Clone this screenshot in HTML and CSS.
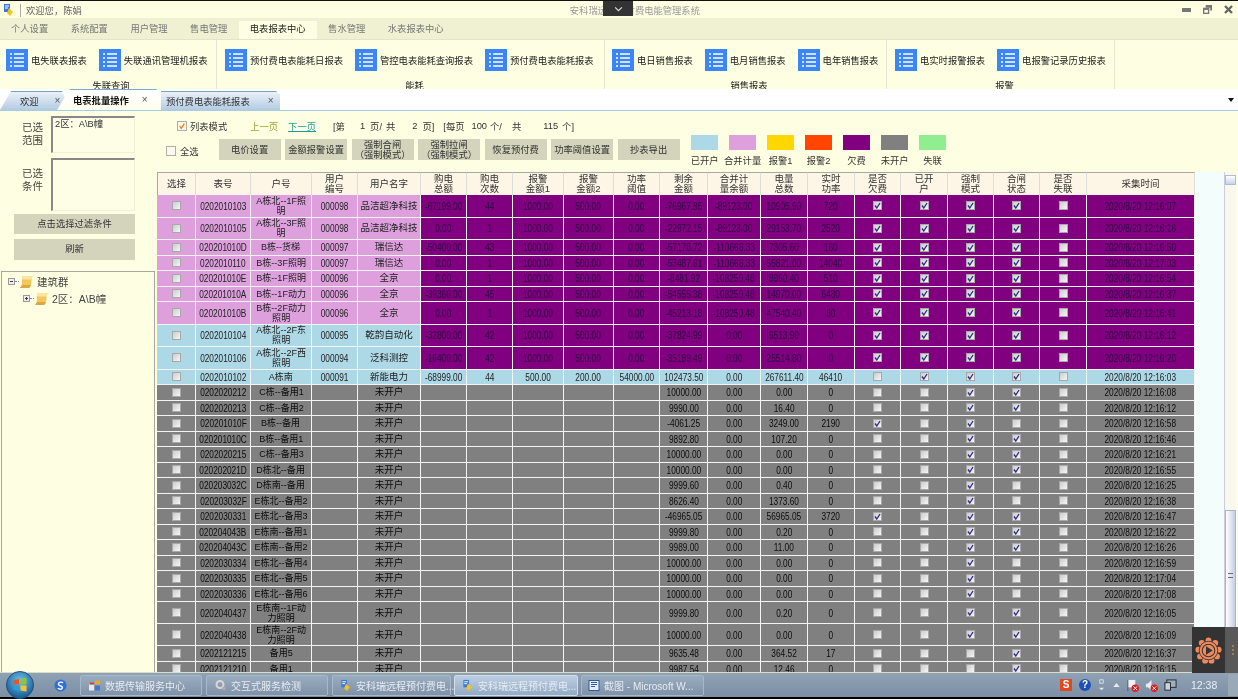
FILE: index.html
```html
<!DOCTYPE html>
<html>
<head>
    <title>安科瑞远程预付费电能管理系统</title>
    <link rel="stylesheet" href="styles.css">
</head>
<body>
    <svg class="sprite">
        <symbol id="list" viewBox="0 0 22 22">
            <rect width="22" height="22" fill="#3a86f8"/>
            <path d="M8 5h10M8 9h10M8 13h10M8 17h10" stroke="#fff" stroke-width="1.4"/>
            <path d="M4 5h2M4 9h2M4 13h2M4 17h2" stroke="#fff" stroke-width="1.4"/>
        </symbol>
        <symbol id="scroll" viewBox="0 0 13 12">
            <path d="M2 0h11c-1 1-1.500 2-1.500 4.500s-.5 5-2.500 7.500H0c1.500-1 2-3 2-6s.5-4 0-6z" fill="#f2c75c"/>
            <path d="M2 0h11c-1 1-1.500 2-1.500 3.500H2.300z" fill="#fbe6a0"/>
            <path d="M0 12h9c1-.8 1.500-1.800 2-3H2z" fill="#dca93e"/>
        </symbol>
        <symbol id="doc" viewBox="0 0 12 14">
            <path d="M1 1h6v8H1z" fill="#3c78d8"/>
            <path d="M6 5l4 4-3 4-3-3z" fill="#f5c518"/>
            <path d="M2 3h4M2 5h3" stroke="#fff"/>
        </symbol>
    </svg>

    <div class="screen">
        <div class="topline"></div>

        <div class="titlebar">
            <svg class="logo"><use href="#doc"/></svg>
            <span class="title-sep"></span>
            <span class="welcome">欢迎您，陈娟</span>
            <span class="app-name">安科瑞远程预付费电能管理系统</span>
            <div class="win-btns">
                <svg viewBox="0 0 9 9"><rect y="3" width="9" height="4" fill="#777"/></svg>
                <svg viewBox="0 0 10 10"><path d="M3 0h7v6H8V3H3z" fill="#777"/><rect y="3" width="7" height="7" fill="#777"/><rect x="1.500" y="5.500" width="4" height="3" fill="#fefee2"/></svg>
                <svg viewBox="0 0 9 9"><path d="M1 1l7 7M8 1l-7 7" stroke="#666" stroke-width="2.400"/></svg>
            </div>
        </div>

        <div class="menubar">
            <span class="menu-tab">个人设置</span>
            <span class="menu-tab">系统配置</span>
            <span class="menu-tab">用户管理</span>
            <span class="menu-tab">售电管理</span>
            <span class="menu-tab active">电表报表中心</span>
            <span class="menu-tab">售水管理</span>
            <span class="menu-tab">水表报表中心</span>
        </div>

        <div class="ribbon">
            <div class="rib-group g1">
                <div class="rib-btns">
                    <span class="rib-btn"><svg><use href="#list"/></svg>电失联表报表</span>
                    <span class="rib-btn"><svg><use href="#list"/></svg>失联通讯管理机报表</span>
                </div>
                <div class="rib-label">失联查询</div>
            </div>
            <div class="rib-group g2">
                <div class="rib-btns">
                    <span class="rib-btn"><svg><use href="#list"/></svg>预付费电表能耗日报表</span>
                    <span class="rib-btn"><svg><use href="#list"/></svg>管控电表能耗查询报表</span>
                    <span class="rib-btn"><svg><use href="#list"/></svg>预付费电表能耗报表</span>
                </div>
                <div class="rib-label">能耗</div>
            </div>
            <div class="rib-group g3">
                <div class="rib-btns">
                    <span class="rib-btn"><svg><use href="#list"/></svg>电日销售报表</span>
                    <span class="rib-btn"><svg><use href="#list"/></svg>电月销售报表</span>
                    <span class="rib-btn"><svg><use href="#list"/></svg>电年销售报表</span>
                </div>
                <div class="rib-label">销售报表</div>
            </div>
            <div class="rib-group g4">
                <div class="rib-btns">
                    <span class="rib-btn"><svg><use href="#list"/></svg>电实时报警报表</span>
                    <span class="rib-btn"><svg><use href="#list"/></svg>电报警记录历史报表</span>
                </div>
                <div class="rib-label">报警</div>
            </div>
        </div>

        <div class="doctabs">
            <div class="doc-tab first"><span>欢迎</span><i>×</i></div>
            <div class="doc-tab current"><span>电表批量操作</span><i>×</i></div>
            <div class="doc-tab third"><span>预付费电表能耗报表</span><i>×</i></div>
            <span class="tabs-arrow"></span>
        </div>

        <div class="main">
            <div class="side">
                <div class="pick">
                    <div class="pick-label">已选<br>范围</div>
                    <div class="pick-box">2区：A\B幢</div>
                </div>
                <div class="pick second">
                    <div class="pick-label">已选<br>条件</div>
                    <div class="pick-box"></div>
                </div>
                <div class="side-btn">点击选择过滤条件</div>
                <div class="side-btn refresh">刷新</div>
                <div class="tree">
                    <div class="tree-row">
                        <svg class="expander" viewBox="0 0 7 7"><rect x=".5" y=".5" width="6" height="6" fill="#eee" stroke="#999"/><path d="M2 3.500h3" stroke="#444"/></svg>
                        <span class="dots"></span>
                        <svg class="scroll-ico"><use href="#scroll"/></svg>
                        <span>建筑群</span>
                    </div>
                    <div class="tree-row child">
                        <svg class="expander" viewBox="0 0 7 7"><rect x=".5" y=".5" width="6" height="6" fill="#eee" stroke="#999"/><path d="M2 3.500h3M3.500 2v3" stroke="#336"/></svg>
                        <span class="dots"></span>
                        <svg class="scroll-ico"><use href="#scroll"/></svg>
                        <span>2区：A\B幢</span>
                    </div>
                </div>
            </div>

            <div class="content">
                <div class="tools">
                    <div class="tools-row">
                        <span class="box orange"><svg viewBox="0 0 10 10"><path d="M2 5l2 3 4-6" fill="none" stroke="#e8820c" stroke-width="1.600"/></svg></span>
                        <span class="mode">列表模式</span>
                        <span class="prev">上一页</span>
                        <span class="next">下一页</span>
                        <span class="pg p1">[第</span>
                        <span class="pg p2">1</span>
                        <span class="pg p3">页/</span>
                        <span class="pg p4">共</span>
                        <span class="pg p5">2</span>
                        <span class="pg p6">页]</span>
                        <span class="pg p7">[每页</span>
                        <span class="pg p8">100</span>
                        <span class="pg p9">个/</span>
                        <span class="pg p10">共</span>
                        <span class="pg p11">115</span>
                        <span class="pg p12">个]</span>
                    </div>
                    <div class="tools-row second">
                        <span class="box"></span>
                        <span class="all">全选</span>
                        <div class="actions">
                            <span class="act">电价设置</span>
                            <span class="act">金额报警设置</span>
                            <span class="act">强制合闸<br>（强制模式）</span>
                            <span class="act">强制拉闸<br>（强制模式）</span>
                            <span class="act">恢复预付费</span>
                            <span class="act">功率阈值设置</span>
                            <span class="act">抄表导出</span>
                        </div>
                        <div class="legend">
                            <div class="leg"><b class="c-blue"></b>已开户</div>
                            <div class="leg"><b class="c-plum"></b>合并计量</div>
                            <div class="leg"><b class="c-gold"></b>报警1</div>
                            <div class="leg"><b class="c-red"></b>报警2</div>
                            <div class="leg"><b class="c-purple"></b>欠费</div>
                            <div class="leg"><b class="c-gray"></b>未开户</div>
                            <div class="leg"><b class="c-green"></b>失联</div>
                        </div>
                    </div>
                </div>

                <div class="grid-area">
                    <table class="meters">
                        <thead>
                            <tr>
                                <th>选择</th><th>表号</th><th>户号</th><th>用户<br>编号</th><th>用户名字</th>
                                <th>购电<br>总额</th><th>购电<br>次数</th><th>报警<br>金额1</th><th>报警<br>金额2</th><th>功率<br>阈值</th>
                                <th>剩余<br>金额</th><th>合并计<br>量余额</th><th>电量<br>总数</th><th>实时<br>功率</th><th>是否<br>欠费</th>
                                <th>已开<br>户</th><th>强制<br>模式</th><th>合闸<br>状态</th><th>是否<br>失联</th><th>采集时间</th>
                            </tr>
                        </thead>
                        <tbody id="meterRows"></tbody>
                    </table>
                    <div class="grid-blank"></div>
                    <div class="vscroll">
                        <div class="vs-up"></div>
                        <div class="vs-thumb"><span></span></div>
                    </div>
                </div>
            </div>
        </div>

        <div class="taskbar">
            <svg class="orb" viewBox="0 0 30 30">
                <defs><radialGradient id="orbFill" cx=".5" cy=".35" r=".7"><stop offset="0" stop-color="#6fc3ee"/><stop offset="1" stop-color="#0c4f8a"/></radialGradient></defs>
                <circle cx="15" cy="15" r="14.500" fill="url(#orbFill)" stroke="#23507a"/>
                <path d="M8 10l6-1.500v6H8z" fill="#e8552a"/>
                <path d="M15.500 8.300l6.500-1v7l-6.500.2z" fill="#8cc63f"/>
                <path d="M8 15.500h6V21l-6-1z" fill="#2a9fe0"/>
                <path d="M15.500 15.500H22V22l-6.500-1z" fill="#fbc02d"/>
            </svg>
            <svg class="quick" viewBox="0 0 14 14"><circle cx="7" cy="7" r="6.500" fill="#2e6fd8"/><path d="M9.800 4C7 2.500 4 4 5 6s4.500 1.200 4 3.500-3.500 1.500-5 .5" fill="none" stroke="#fff" stroke-width="1.500"/></svg>
            <div class="task"><svg viewBox="0 0 12 12"><path d="M0 5h5v6H0z" fill="#e8e8e8"/><path d="M6 1h5v4H6z" fill="#f2a71b"/><path d="M6 6h5v5H6z" fill="#3c78d8"/><path d="M1 3h4v2H1z" fill="#d8402a"/></svg>数据传输服务中心</div>
            <div class="task"><svg viewBox="0 0 12 12"><circle cx="5" cy="5" r="3.500" fill="none" stroke="#d8d8d8" stroke-width="2"/><circle cx="9" cy="9" r="2" fill="#aaa"/></svg>交互式服务检测</div>
            <div class="task app"><svg><use href="#doc"/></svg>安科瑞远程预付费电...</div>
            <div class="task app on"><svg><use href="#doc"/></svg>安科瑞远程预付费电...</div>
            <div class="task word"><svg viewBox="0 0 12 12"><rect x="1" y="1" width="10" height="10" fill="#e8eef8" stroke="#2a5ca8"/><path d="M3 3h6M3 5h6M3 7h4" stroke="#2a5ca8"/></svg>截图 - Microsoft W...</div>
            <div class="tray">
                <span class="t-s">S</span>
                <span class="t-help">?</span>
                <svg class="t-small" viewBox="0 0 8 14"><path d="M2 1h4v4H2z" fill="none" stroke="#dfe6ee"/><path d="M1 10h6l-3 3z" fill="#dfe6ee"/></svg>
                <svg class="t-up" viewBox="0 0 8 5"><path d="M0 5l4-5 4 5z" fill="#e4ebf2"/></svg>
                <svg class="t-ico" viewBox="0 0 14 14"><path d="M2 1h8v8H2z" fill="#eef2f6"/><path d="M2 1v12" stroke="#555"/><circle cx="10" cy="10" r="4" fill="#d82020"/><path d="M8 8l4 4M12 8l-4 4" stroke="#fff"/></svg>
                <svg class="t-ico" viewBox="0 0 14 14"><path d="M1 5h2l4-4v11L3 9H1z" fill="#e8ecf0"/><circle cx="10" cy="10" r="4" fill="#d82020"/><path d="M8 8l4 4M12 8l-4 4" stroke="#fff"/></svg>
                <svg class="t-ico" viewBox="0 0 14 14"><rect x="3" y="1" width="10" height="8" fill="#9fb0b8" stroke="#223"/><rect x="1" y="4" width="6" height="8" fill="#c8d4d8" stroke="#223"/></svg>
                <span class="clock">12:38</span>
                <span class="show-desk"></span>
            </div>
        </div>
        <div class="bottomline"></div>

        <div class="title-drop"><svg viewBox="0 0 8 5"><path d="M1 1l3 3 3-3" fill="none" stroke="#ddd"/></svg></div>

        <div class="recorder">
            <svg viewBox="0 0 32 32">
                <g fill="#f08a5d">
                    <circle cx="16" cy="4" r="3.500"/><circle cx="24" cy="7" r="3.500"/><circle cx="28" cy="15" r="3.500"/>
                    <circle cx="26" cy="23" r="3.500"/><circle cx="19.500" cy="28" r="3.500"/><circle cx="12" cy="28" r="3.500"/>
                    <circle cx="6" cy="23" r="3.500"/><circle cx="4" cy="15" r="3.500"/><circle cx="8" cy="7" r="3.500"/>
                </g>
                <circle cx="16" cy="16" r="11" fill="#f08a5d" stroke="#333" stroke-width="1"/>
                <circle cx="16" cy="16" r="7.500" fill="none" stroke="#333" stroke-width="1.200"/>
                <path d="M13 11l8 5-8 5z" fill="#333"/>
            </svg>
            <div class="rec-dots"><i></i><i></i><i></i></div>
        </div>
    </div>

    <script src="app.js"></script>
</body>
</html>
```

FILE: styles.css
```css
html, body {
    margin: 0;
    padding: 0;
    overflow: hidden;
}
body {
    width: 1238px;
    height: 699px;
    font-family: "Liberation Sans", "Noto Sans CJK SC", sans-serif;
    font-size: 9.3px;
    color: #333;
    background-color: #000;
}
.sprite {
    display: none;
}
.screen {
    position: relative;
    display: flex;
    flex-direction: column;
    width: 1238px;
    height: 699px;
    overflow: hidden;
    filter: blur(.35px);
}
.topline {
    height: 1px;
    background-color: #111;
}
.titlebar {
    display: flex;
    align-items: center;
    height: 17px;
    background-color: #fefee2;
    color: #777;
}
.logo {
    width: 12px;
    height: 14px;
    margin-left: 3px;
}
.title-sep {
    width: 1px;
    height: 13px;
    margin: 2px 5px 0 5px;
    background-color: #aaa;
}
.welcome {
    color: #666;
}
.app-name {
    margin-left: 488px;
    color: #999;
}
.win-btns {
    display: flex;
    align-items: center;
    gap: 12px;
    margin-left: auto;
    margin-right: 5px;
}
.win-btns svg {
    width: 9px;
    height: 9px;
}
.title-drop {
    position: absolute;
    left: 603px;
    top: 1px;
    display: flex;
    align-items: center;
    justify-content: center;
    width: 30px;
    height: 15px;
    background-color: #333;
}
.title-drop svg {
    width: 9px;
    height: 6px;
}
.menubar {
    display: flex;
    align-items: flex-end;
    gap: .5px;
    height: 22px;
    background-color: #f0f0d2;
    box-sizing: border-box;
    border-bottom: 1px solid #e4e4c8;
}
.menu-tab {
    padding: 0 11px;
    height: 18px;
    line-height: 16px;
    color: #777;
}
.menu-tab.active {
    background-color: #fefee2;
    color: #222;
}
.ribbon {
    display: flex;
    height: 49px;
    overflow: hidden;
    background-color: #fefee2;
}
.rib-group {
    flex: none;
    box-sizing: border-box;
    height: 60px;
    border-right: 1px solid #e6e6d0;
    padding-top: 9px;
}
.g1 { width: 217px; padding-left: 6px; }
.g2 { width: 388px; padding-left: 8px; }
.g3 { width: 282px; padding-left: 7px; }
.g4 { width: 228px; padding-left: 8px; }
.rib-btns {
    display: flex;
    gap: 12px;
}
.rib-btn {
    display: flex;
    align-items: center;
    gap: 3px;
    height: 22px;
    color: #222;
    white-space: nowrap;
}
.rib-btn svg {
    width: 22px;
    height: 22px;
}
.rib-label {
    margin-top: 9px;
    text-align: center;
    color: #222;
    line-height: 12px;
}
.doctabs {
    position: relative;
    display: flex;
    align-items: flex-end;
    height: 22px;
    box-sizing: border-box;
    background-color: #fff;
    border-bottom: 1px solid #a9cbe4;
}
.doc-tab {
    display: flex;
    align-items: center;
    height: 19px;
    color: #333;
    background: linear-gradient(#7f9fbf 0, #7f9fbf 1px, #eaf1f8 1px, #b3cbe3 100%);
}
.doc-tab span {
    white-space: nowrap;
}
.doc-tab i {
    font-style: normal;
    font-size: 10px;
    color: #555;
}
.doc-tab.first {
    width: 70px;
    padding-left: 20px;
    box-sizing: border-box;
    clip-path: polygon(0 100%, 11px 0, 62px 0, 70px 100%);
}
.doc-tab.first i {
    margin-left: 16px;
}
.doc-tab.current {
    width: 104px;
    height: 21px;
    margin-left: -13px;
    padding-left: 16px;
    box-sizing: border-box;
    font-weight: bold;
    color: #111;
    background: linear-gradient(#7ba7cc 0, #7ba7cc 1px, #fff 1px, #fefef0 100%);
    clip-path: polygon(0 100%, 13px 0, 99px 0, 103px 3px, 104px 100%);
}
.doc-tab.current i {
    margin-left: 13px;
    font-weight: normal;
}
.doc-tab.third {
    width: 119px;
    padding-left: 5px;
    box-sizing: border-box;
    clip-path: polygon(0 0, 115px 0, 119px 3px, 119px 100%, 0 100%);
}
.doc-tab.third i {
    margin-left: 18px;
}
.tabs-arrow {
    position: absolute;
    right: 4px;
    top: 9px;
    width: 0;
    height: 0;
    border-left: 3.5px solid transparent;
    border-right: 3.5px solid transparent;
    border-top: 4px solid #111;
}
.main {
    display: flex;
    flex: 1;
    min-height: 0;
    background-color: #fefee2;
}
.side {
    display: flex;
    flex-direction: column;
    flex: none;
    width: 155px;
}
.pick {
    display: flex;
    height: 37px;
    margin-top: 5px;
}
.pick.second {
    height: 53px;
    margin-top: 5px;
}
.pick-label {
    flex: none;
    width: 51px;
    padding-top: 5px;
    padding-left: 22px;
    box-sizing: border-box;
    font-size: 10.5px;
    line-height: 13px;
    color: #444;
}
.pick.second .pick-label {
    padding-top: 9px;
}
.pick-box {
    box-sizing: border-box;
    width: 84px;
    padding: 1px 2px;
    border: 1px solid #f0f0d8;
    border-top: 2px solid #888;
    border-left: 2px solid #888;
    background-color: #fefee6;
    color: #333;
    line-height: 11px;
    white-space: nowrap;
}
.side-btn {
    width: 121px;
    height: 20px;
    margin: 3px 0 0 14px;
    line-height: 20px;
    text-align: center;
    background-color: #d4d4bc;
    color: #333;
}
.side-btn.refresh {
    height: 21px;
    margin-top: 5px;
    line-height: 21px;
}
.tree {
    flex: 1;
    margin: 11px 0 0 1px;
    padding-top: 1px;
    border: 1px solid #a8a8a0;
    border-bottom: none;
    color: #444;
    font-size: 10.5px;
}
.tree-row {
    display: flex;
    align-items: center;
    height: 17px;
    padding-left: 6px;
}
.tree-row.child {
    padding-left: 21px;
}
.expander {
    width: 7px;
    height: 7px;
}
.dots {
    width: 4px;
    border-top: 1px dotted #888;
}
.scroll-ico {
    width: 13px;
    height: 12px;
    margin: 0 4px 0 1px;
}
.content {
    display: flex;
    flex-direction: column;
    flex: 1;
    min-width: 0;
}
.tools {
    flex: none;
    height: 61px;
}
.tools-row {
    display: flex;
    align-items: center;
    height: 10px;
    margin-top: 10px;
    padding-left: 22px;
    white-space: nowrap;
}
.tools-row.second {
    align-items: flex-start;
    height: 21px;
    margin-top: 8px;
    padding-left: 11px;
}
.box {
    flex: none;
    box-sizing: border-box;
    width: 10px;
    height: 10px;
    border: 1px solid #b0b0a0;
    background-color: #f8f8f0;
}
.box svg {
    display: block;
    width: 8px;
    height: 8px;
}
.tools-row.second .box {
    margin-top: 7px;
}
.mode {
    margin-left: 3px;
}
.prev {
    margin-left: 23px;
    color: #9da528;
}
.next {
    margin-left: 10px;
    color: #1b9a9a;
    text-decoration: underline;
}
.pg {
    color: #333;
}
.p1 { margin-left: 17px; }
.p2 { margin-left: 15px; }
.p3 { margin-left: 5px; }
.p4 { margin-left: 4px; }
.p5 { margin-left: 17px; }
.p6 { margin-left: 5px; }
.p7 { margin-left: 9px; }
.p8 { margin-left: 7px; }
.p9 { margin-left: 3px; }
.p10 { margin-left: 10px; }
.p11 { margin-left: 22px; }
.p12 { margin-left: 4px; }
.all {
    margin: 5px 0 0 4px;
}
.actions {
    display: flex;
    gap: 4.5px;
    margin-left: 20px;
}
.act {
    width: 62px;
    height: 21px;
    display: flex;
    align-items: center;
    justify-content: center;
    text-align: center;
    line-height: 10px;
    background-color: #d4d4bc;
    color: #333;
}
.legend {
    display: flex;
    margin: -4px 0 0 6px;
}
.leg {
    display: flex;
    flex-direction: column;
    align-items: center;
    width: 38px;
    color: #333;
    line-height: 12px;
}
.leg b {
    display: block;
    width: 27px;
    height: 15px;
    margin-bottom: 5px;
}
.c-blue { background-color: #add8e6; }
.c-plum { background-color: #dda0dd; }
.c-gold { background-color: #ffd700; }
.c-red { background-color: #ff4500; }
.c-purple { background-color: #800080; }
.c-gray { background-color: #808080; }
.c-green { background-color: #90ee90; }
.grid-area {
    display: flex;
    flex: 1;
    min-height: 0;
    padding-left: 2px;
    overflow: hidden;
}
.meters {
    flex: none;
    width: 1038px;
    table-layout: fixed;
    border-collapse: separate;
    border-spacing: 0;
    align-self: flex-start;
    text-align: center;
    color: #222;
}
.meters th {
    height: 23px;
    padding: 0;
    box-sizing: border-box;
    border-top: 1px solid #a8a8a0;
    border-right: 1px solid #ddd;
    background-color: #fdf5e6;
    font-weight: normal;
    font-size: 9.5px;
    line-height: 10px;
    color: #333;
}
.meters th:first-child {
    border-left: 1px solid #a8a8a0;
}
.meters th:nth-child(1) { width: 39px; }
.meters th:nth-child(2) { width: 55px; }
.meters th:nth-child(3) { width: 61px; }
.meters th:nth-child(4) { width: 46px; }
.meters th:nth-child(5) { width: 63px; }
.meters th:nth-child(6) { width: 46px; }
.meters th:nth-child(7) { width: 46px; }
.meters th:nth-child(8) { width: 51px; }
.meters th:nth-child(9) { width: 50px; }
.meters th:nth-child(10) { width: 46px; }
.meters th:nth-child(11) { width: 48px; }
.meters th:nth-child(12) { width: 53px; }
.meters th:nth-child(13) { width: 47px; }
.meters th:nth-child(14) { width: 47px; }
.meters th:nth-child(15) { width: 46px; }
.meters th:nth-child(16) { width: 47px; }
.meters th:nth-child(17) { width: 46px; }
.meters th:nth-child(18) { width: 46px; }
.meters th:nth-child(19) { width: 47px; }
.meters th:nth-child(20) { width: 108px; }
.meters td {
    height: 15.5px;
    padding: 0;
    box-sizing: border-box;
    border-right: 1px solid #f4f4f4;
    border-bottom: 1px solid #f4f4f4;
    font-size: 9.5px;
    line-height: 10px;
    white-space: nowrap;
}
/* the figures are squeezed like the captured screen, Arial has no narrow cut here */
.meters td.num {
    font-size: 10.5px;
}
.meters td.num span {
    display: inline-block;
    margin: 0 -30px;
    transform: scaleX(.79);
}
.meters td.hu span {
    display: inline-block;
    margin: 0 -10px;
    transform: scaleX(.95);
}
.meters tr.tall td {
    height: 22.5px;
}
.meters tr.gray.tall td {
    height: 22px;
}
.meters tr.gray td {
    background-color: #808080;
    color: #0c0c0c;
}
.meters tr.open td {
    background-color: #add8e6;
}
.meters tr.plum td {
    background-color: #dda0dd;
}
.meters tr.owe td:nth-child(n+6) {
    background-color: #800080;
    color: #2c0a40;
}
.check {
    display: block;
    box-sizing: border-box;
    width: 9px;
    height: 9px;
    margin: 0 auto;
    border: 1px solid #a8a8a8;
    background: linear-gradient(135deg, #ccc, #f6f6f6);
}
.check svg {
    display: block;
    width: 7px;
    height: 7px;
}
.grid-blank {
    flex: none;
    width: 29px;
    background-color: #f3fdfb;
}
.vscroll {
    flex: none;
    width: 12px;
    box-sizing: border-box;
    border-left: 1px solid #ccd;
    background-color: #f8f8ec;
    display: flex;
    flex-direction: column;
}
.vs-up {
    height: 10px;
    margin-top: 3px;
    background: linear-gradient(#fff, #c8d4ec);
    border: 1px solid #b0bcd0;
    box-sizing: border-box;
}
.vs-thumb {
    display: flex;
    align-items: center;
    justify-content: center;
    height: 130px;
    margin-top: 325px;
    box-sizing: border-box;
    border: 1px solid #a8b4cc;
    background: linear-gradient(90deg, #fff, #c4cee6);
}
.vs-thumb span {
    width: 5px;
    height: 5px;
    border-top: 1px solid #667;
    border-bottom: 1px solid #667;
    box-sizing: border-box;
}
.taskbar {
    display: flex;
    flex: none;
    align-items: flex-end;
    height: 25px;
    box-sizing: border-box;
    padding-bottom: 1px;
    border-top: 1px solid #d8dcc8;
    background: linear-gradient(#8fa1b4, #7d8fa4);
    color: #e6ecf2;
}
.orb {
    flex: none;
    width: 28px;
    height: 28px;
    margin: 0 0 -3px 6px;
    position: relative;
    z-index: 1;
}
.quick {
    flex: none;
    width: 13px;
    height: 13px;
    margin: 0 13px 4px 20px;
}
.task {
    display: flex;
    align-items: center;
    flex: none;
    box-sizing: border-box;
    width: 122px;
    height: 21px;
    margin-right: 4px;
    padding-left: 8px;
    gap: 4px;
    border: 1px solid #a8b8c8;
    border-radius: 2px;
    background: linear-gradient(#9aacbf, #7f92a8);
    font-size: 10px;
    white-space: nowrap;
}
.task svg {
    flex: none;
    width: 12px;
    height: 13px;
}
.task.app {
    width: 119px;
    margin-right: 3px;
    padding-left: 7px;
}
.task.on {
    width: 124px;
    background: linear-gradient(#bccde0, #94abc6);
    border-color: #d0dce8;
}
.task.word {
    width: 123px;
    padding-left: 6px;
}
.tray {
    display: flex;
    align-items: center;
    flex: 1;
    height: 22px;
    padding-left: 352px;
}
.t-s {
    flex: none;
    width: 12px;
    height: 12px;
    line-height: 12px;
    text-align: center;
    background-color: #e0481e;
    color: #fff;
    font: bold 10px/12px "Liberation Sans", sans-serif;
}
.t-help {
    flex: none;
    width: 12px;
    height: 12px;
    margin-left: 7px;
    border-radius: 50%;
    background-color: #1c50b8;
    color: #fff;
    text-align: center;
    font: bold 10px/12px "Liberation Sans", sans-serif;
}
.t-small {
    flex: none;
    width: 7px;
    height: 14px;
    margin-left: 7px;
}
.t-up {
    flex: none;
    width: 7px;
    height: 4px;
    margin-left: 8px;
}
.t-ico {
    flex: none;
    width: 13px;
    height: 13px;
    margin-left: 6px;
}
.clock {
    flex: none;
    margin-left: 14px;
    font: 10.5px "Liberation Sans", sans-serif;
    color: #e8eef4;
}
.show-desk {
    flex: none;
    align-self: stretch;
    width: 10px;
    margin-left: auto;
    background-color: #9aa9b8;
}
.bottomline {
    flex: none;
    height: 2px;
    background-color: #000;
}
.recorder {
    position: absolute;
    left: 1192px;
    top: 627px;
    display: flex;
    align-items: center;
    box-sizing: border-box;
    width: 46px;
    height: 46px;
    padding-left: 3px;
    background: linear-gradient(90deg, #333 72%, #5a5a5a 72%);
}
.recorder svg {
    flex: none;
    width: 27px;
    height: 27px;
}
.rec-dots {
    display: flex;
    flex-direction: column;
    gap: 2px;
    margin-left: 10px;
}
.rec-dots i {
    display: block;
    width: 2px;
    height: 2px;
    background-color: #a08050;
}
```

FILE: app.js
```js
// 28 of 115 meters, first page of the list
const owed = ['1000.00', '500.00', '0.00'];
const paid = [
    ['0202010103', 'A栋北--1F照<br>明', '000098', '品洁超净科技', '-67199.00', '44', '-76967.85', '-89123.00', '10905.90', '720', '12:16:07', 'plum tall'],
    ['0202010105', 'A栋北--3F照<br>明', '000098', '品洁超净科技', '0.00', '1', '-22972.15', '-89123.00', '29153.70', '2520', '12:16:16', 'plum tall'],
    ['020201010D', 'B栋--货梯', '000097', '瑞信达', '-50400.00', '43', '-57178.72', '-110666.33', '7305.60', '160', '12:16:50', 'plum'],
    ['0202010110', 'B栋--3F照明', '000097', '瑞信达', '0.00', '1', '-53487.61', '-110666.33', '55821.00', '14040', '12:17:03', 'plum'],
    ['020201010E', 'B栋--1F照明', '000096', '全京', '0.00', '1', '-8481.92', '-108250.48', '8960.40', '510', '12:16:54', 'plum'],
    ['020201010A', 'B栋--1F动力', '000096', '全京', '-39360.00', '45', '-54555.38', '-108250.48', '14970.00', '6480', '12:16:37', 'plum'],
    ['020201010B', 'B栋--2F动力<br>照明', '000096', '全京', '0.00', '1', '-45213.18', '-108250.48', '47540.40', '80', '12:16:41', 'plum tall'],
    ['0202010104', 'A栋北--2F东<br>照明', '000095', '乾韵自动化', '-32800.00', '42', '-37824.99', '0.00', '6513.90', '0', '12:16:12', 'open tall'],
    ['0202010106', 'A栋北--2F西<br>照明', '000094', '泛科测控', '-16400.00', '42', '-35189.49', '0.00', '25514.80', '0', '12:16:20', 'open tall']
];
const unopened = [
    ['0202020212', 'C栋--备用1', '10000.00', '0.00', '0', '00110', '12:16:08'],
    ['0202020213', 'C栋--备用2', '9990.00', '16.40', '0', '00110', '12:16:12'],
    ['020201010F', 'B栋--备用', '-4061.25', '3249.00', '2190', '10100', '12:16:58'],
    ['020201010C', 'B栋--备用1', '9892.80', '107.20', '0', '00110', '12:16:46'],
    ['0202020215', 'C栋--备用3', '10000.00', '0.00', '0', '00110', '12:16:21'],
    ['020202021D', 'D栋北--备用', '10000.00', '0.00', '0', '00110', '12:16:55'],
    ['020203032C', 'D栋南--备用', '9999.60', '0.40', '0', '00100', '12:16:25'],
    ['020203032F', 'E栋北--备用2', '8626.40', '1373.60', '0', '00100', '12:16:38'],
    ['0202030331', 'E栋北--备用3', '-46965.05', '56965.05', '3720', '10110', '12:16:47'],
    ['020204043B', 'E栋南--备用1', '9999.80', '0.20', '0', '00110', '12:16:22'],
    ['020204043C', 'E栋南--备用2', '9989.00', '11.00', '0', '00110', '12:16:26'],
    ['0202030334', 'E栋北--备用4', '10000.00', '0.00', '0', '00100', '12:16:59'],
    ['0202030335', 'E栋北--备用5', '10000.00', '0.00', '0', '00100', '12:17:04'],
    ['0202030336', 'E栋北--备用6', '10000.00', '0.00', '0', '00100', '12:17:08'],
    ['0202040437', 'E栋南--1F动<br>力照明', '9999.80', '0.20', '0', '00110', '12:16:05', 'tall'],
    ['0202040438', 'E栋南--2F动<br>力照明', '10000.00', '0.00', '0', '00110', '12:16:09', 'tall'],
    ['0202121215', '备用5', '9635.48', '364.52', '17', '00010', '12:16:37'],
    ['0202121210', '备用1', '9987.54', '12.46', '0', '00010', '12:16:15']
];

function check(on) {
    const mark = '<svg viewBox="0 0 7 7"><path d="M1 3.500l1.800 2.500L6 1" fill="none" stroke="#2b2b8c" stroke-width="1.300"/></svg>';
    return `<td><span class="check">${on ? mark : ''}</span></td>`;
}

function row(kind, cells, flags, time) {
    const tds = cells.map((c, i) => {
        // 户号 and 用户名字 hold Chinese text, the rest are figures
        if (i === 1) return `<td class="hu"><span>${c}</span></td>`;
        if (i === 3) return `<td>${c}</td>`;
        return `<td class="num"><span>${c}</span></td>`;
    }).join('');
    const boxes = flags.split('').map(f => check(f === '1')).join('');
    return `<tr class="${kind}">${check(false)}${tds}${boxes}<td class="num"><span>2020/8/20 ${time}</span></td></tr>`;
}

const rows = paid.map(r => row(`owe ${r[11]}`,
    [r[0], r[1], r[2], r[3], r[4], r[5], ...owed, r[6], r[7], r[8], r[9]], '11110', r[10]));

rows.push(row('open',
    ['0202010102', 'A栋南', '000091', '新能电力', '-68999.00', '44', '500.00', '200.00', '54000.00', '102473.50', '0.00', '267611.40', '46410'],
    '01110', '12:16:03'));

unopened.forEach(r => {
    rows.push(row(`gray ${r[7] || ''}`,
        [r[0], r[1], '', '未开户', '', '', '', '', '', r[2], '0.00', r[3], r[4]], r[5], r[6]));
});

document.getElementById('meterRows').innerHTML = rows.join('');
```
